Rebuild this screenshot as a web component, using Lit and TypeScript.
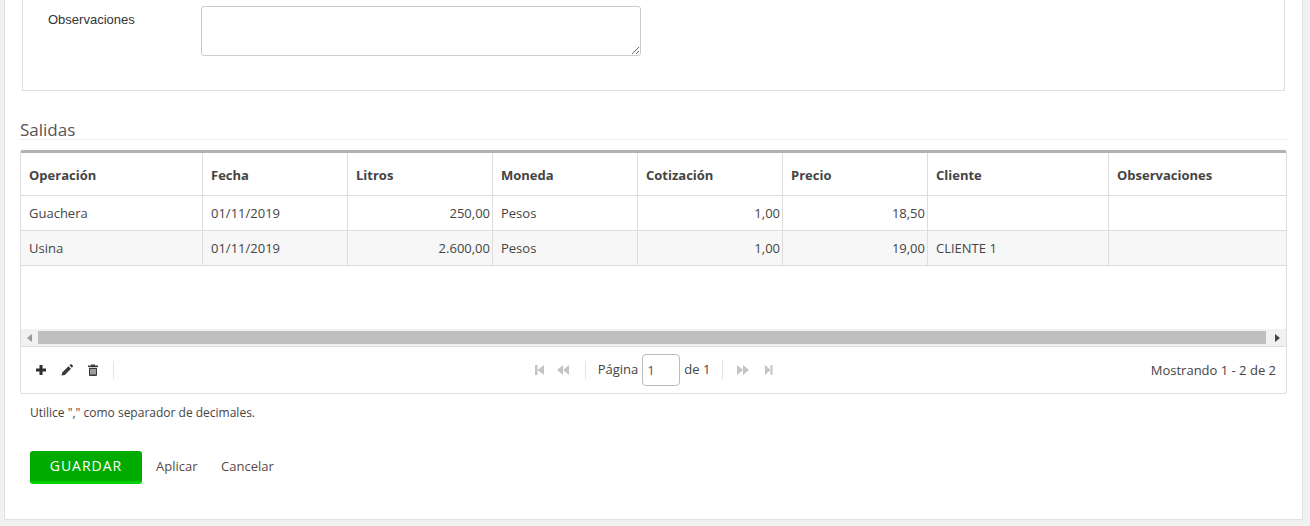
import { LitElement, html, css, svg } from "lit";
import { customElement } from "lit/decorators.js";

const COLS = [
  { label: "Operación", width: 181 },
  { label: "Fecha", width: 145 },
  { label: "Litros", width: 145 },
  { label: "Moneda", width: 145 },
  { label: "Cotización", width: 145 },
  { label: "Precio", width: 145 },
  { label: "Cliente", width: 181 },
  { label: "Observaciones", width: 178 },
];

const ROWS = [
  ["Guachera", "01/11/2019", "250,00", "Pesos", "1,00", "18,50", "", ""],
  ["Usina", "01/11/2019", "2.600,00", "Pesos", "1,00", "19,00", "CLIENTE 1", ""],
];

const NUMERIC = [2, 4, 5];

const icon = (w: number, h: number, body: unknown) => html`
  <svg width=${w} height=${h} viewBox="0 0 ${w} ${h}">${body}</svg>
`;

const plus = svg`<path d="M3.500 1h3v3.500H10v3H6.500V11h-3V7.500H0v-3h3.500z" fill="#2f2f2f"/>`;
const pencil = svg`<path d="M7.500 2.200L10 4.700 3.800 10.900l-3.300.7.700-3.100zM8.400 1.300l.9-.9a1 1 0 0 1 1.400 0l1 1a1 1 0 0 1 0 1.400l-.9 1z" fill="#3a3a3a"/>`;
const trash = svg`<path d="M3 1.500V.5h4v1h3V3H0V1.500zM1 3.800h8V11a1 1 0 0 1-1 1H2a1 1 0 0 1-1-1zM2.500 5v5.500h1V5zM4.500 5v5.500h1V5zM6.500 5v5.500h1V5z" fill="#3a3a3a" fill-rule="evenodd"/>`;
const first = svg`<path d="M0 1h2.500v10H0zM9 1v10L2.500 6z" fill="#c4c4c4"/>`;
const prev = svg`<path d="M6 1v10L0 6zM12 1v10L6 6z" fill="#c4c4c4"/>`;
const next = svg`<path d="M0 1v10l6-5zM6 1v10l6-5z" fill="#c4c4c4"/>`;
const last = svg`<path d="M7.500 1H5.500v10h2zM0 1v10l5.500-5z" fill="#c4c4c4"/>`;

@customElement("app-root")
export class AppRoot extends LitElement {
  static styles = css`
    :host {
      display: block;
      height: 526px;
      overflow: hidden;
      background: #f1f1f1;
      font-family: "Open Sans", sans-serif;
      font-size: 13px;
      color: #444;
    }
    .panel {
      margin: 0 7px 0 4px;
      height: 520px;
      box-sizing: border-box;
      background: #fff;
      border: 1px solid #e0e0e0;
      border-top: none;
      padding: 0 14px 0 15px;
    }
    .fieldset {
      margin: 0 3px 0 2px;
      height: 91px;
      box-sizing: border-box;
      border: 1px solid #ddd;
      border-top: none;
      padding: 6px 0 0 25px;
      display: flex;
    }
    .field-label {
      width: 153px;
      font-family: "Liberation Sans", sans-serif;
      font-size: 13px;
      color: #333;
      padding-top: 6px;
    }
    textarea {
      width: 440px;
      height: 50px;
      box-sizing: border-box;
      margin: 0;
      border: 1px solid #ccc;
      border-radius: 3px;
      background: #fff;
      resize: vertical;
      outline: none;
    }
    h3 {
      margin: 29px 0 10px;
      height: 19px;
      font-size: 17px;
      font-weight: 400;
      line-height: 20px;
      color: #555;
      border-bottom: 1px solid #eee;
      box-sizing: content-box;
    }
    .grid {
      width: 1267px;
      box-sizing: border-box;
      border: 1px solid #ddd;
      border-top: 3px solid #b0b0b0;
      border-radius: 3px;
    }
    .body {
      height: 194px;
      box-sizing: border-box;
      display: flex;
      flex-direction: column;
      justify-content: space-between;
      border-bottom: 1px solid #ddd;
    }
    table {
      border-collapse: collapse;
      table-layout: fixed;
      width: 1265px;
    }
    th,
    td {
      border-right: 1px solid #ddd;
      border-bottom: 1px solid #ddd;
      padding: 0 2px 0 8.500px;
      text-align: left;
      white-space: nowrap;
      overflow: hidden;
      box-sizing: border-box;
      height: 35px;
      line-height: 34px;
    }
    th:first-child,
    td:first-child {
      padding-left: 8px;
    }
    th:last-child,
    td:last-child {
      border-right: none;
    }
    th {
      height: 42px;
      padding-top: 2px;
      font-weight: 700;
      color: #444;
    }
    td.num {
      text-align: right;
      padding-right: 1.500px;
    }
    tbody tr:nth-child(even) {
      background: #f7f7f7;
    }
    .scrollbar {
      display: flex;
      align-items: center;
      height: 17px;
      background: #f1f1f1;
      flex: none;
    }
    .arrow {
      width: 17px;
      display: flex;
      justify-content: center;
      flex: none;
    }
    .thumb {
      flex: 1;
      height: 13px;
      margin-right: 3px;
      background: #bfbfbf;
    }
    .pager {
      display: grid;
      grid-template-columns: 1fr auto 1fr;
      align-items: center;
      height: 46px;
      padding: 0 10px 0 15px;
    }
    .tools,
    .nav {
      display: flex;
      align-items: center;
    }
    .tools svg {
      display: block;
      margin-right: 15px;
    }
    .sep {
      width: 1px;
      height: 18px;
      background: #e4e4e4;
    }
    .nav svg {
      display: block;
    }
    .nav input {
      width: 38px;
      height: 32px;
      box-sizing: border-box;
      margin: 0 4px;
      padding: 0 4px;
      border: 1px solid #bbb;
      border-radius: 4px;
      font: inherit;
      color: #555;
      outline: none;
    }
    .lbl {
      padding-bottom: 3px;
    }
    .gap-xs {
      width: 12px;
    }
    .gap-s {
      width: 13px;
    }
    .gap-m {
      width: 14px;
    }
    .gap-l {
      width: 16px;
    }
    .gap-end {
      width: 4px;
    }
    .count {
      text-align: right;
    }
    .hint {
      margin: 11px 0 0 10px;
      font-size: 12px;
      line-height: 16px;
      color: #444;
    }
    .actions {
      display: flex;
      align-items: center;
      margin: 30px 0 0 10px;
    }
    button {
      width: 112px;
      height: 33px;
      border: none;
      border-bottom: 3px solid #00d000;
      border-radius: 3px;
      background: #00ab00;
      color: #fff;
      font: 400 14px "Open Sans", sans-serif;
      letter-spacing: 1px;
      padding: 0 0 2px;
      margin-right: 14px;
    }
    a {
      color: #5a4a42;
      font-size: 13px;
      margin-right: 23.500px;
      padding-bottom: 3px;
    }
  `;

  render() {
    return html`
      <div class="panel">
        <div class="fieldset">
          <div class="field-label">Observaciones</div>
          <textarea></textarea>
        </div>
        <h3>Salidas</h3>
        <div class="grid">
          <div class="body">
            <table>
              <colgroup>
                ${COLS.map((c) => html`<col style="width:${c.width}px" />`)}
              </colgroup>
              <thead>
                <tr>${COLS.map((c) => html`<th>${c.label}</th>`)}</tr>
              </thead>
              <tbody>
                ${ROWS.map(
                  (row) => html`<tr>
                    ${row.map(
                      (v, i) =>
                        html`<td class=${NUMERIC.includes(i) ? "num" : ""}>${v}</td>`
                    )}
                  </tr>`
                )}
              </tbody>
            </table>
            <div class="scrollbar">
              <div class="arrow">${icon(5, 8, svg`<path d="M5 0v8L0 4z" fill="#999"/>`)}</div>
              <div class="thumb"></div>
              <div class="arrow">${icon(5, 8, svg`<path d="M0 0v8l5-4z" fill="#444"/>`)}</div>
            </div>
          </div>
          <div class="pager">
            <div class="tools">
              ${icon(10, 12, plus)} ${icon(12, 12, pencil)} ${icon(10, 12, trash)}
              <div class="sep"></div>
            </div>
            <div class="nav">
              ${icon(9, 12, first)}
              <span class="gap-s"></span>
              ${icon(12, 12, prev)}
              <span class="gap-l"></span>
              <div class="sep"></div>
              <span class="gap-xs"></span>
              <span class="lbl">Página</span>
              <input value="1" />
              <span class="lbl">de 1</span>
              <span class="gap-xs"></span>
              <div class="sep"></div>
              <span class="gap-m"></span>
              ${icon(12, 12, next)}
              <span class="gap-l"></span>
              ${icon(8, 12, last)}
              <span class="gap-end"></span>
            </div>
            <div class="count">Mostrando 1 - 2 de 2</div>
          </div>
        </div>
        <div class="hint">Utilice "," como separador de decimales.</div>
        <div class="actions">
          <button>GUARDAR</button>
          <a>Aplicar</a>
          <a>Cancelar</a>
        </div>
      </div>
    `;
  }
}
